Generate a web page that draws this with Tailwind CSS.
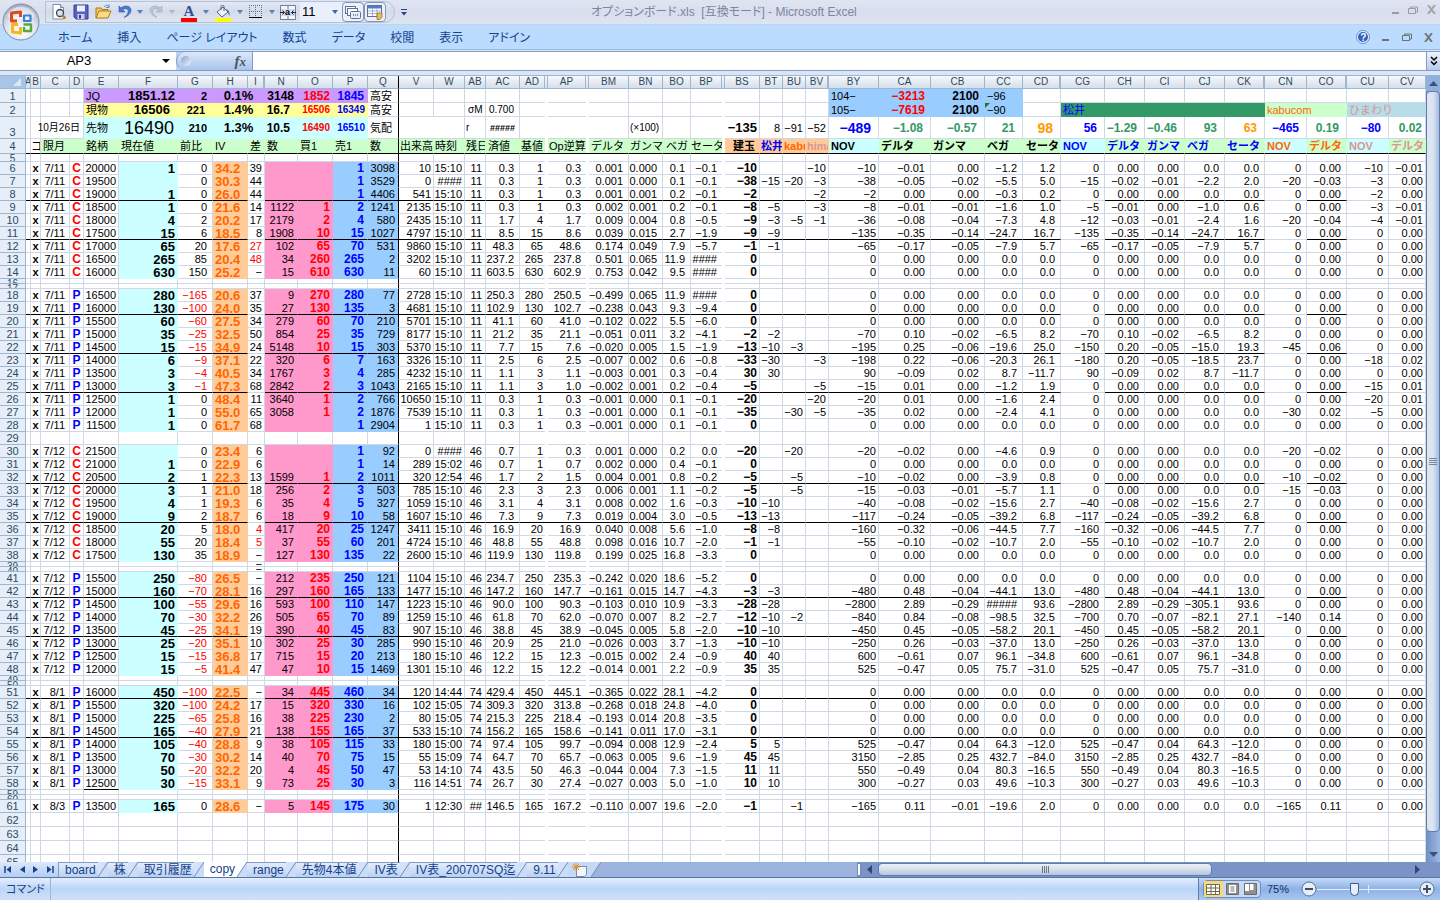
<!DOCTYPE html>
<html lang="ja">
<head>
    <meta charset="UTF-8">
    <meta name="viewport" content="width=device-width, initial-scale=1.0">
    <title>オプションボード.xls [互換モード] - Microsoft Excel</title>
    <script src="https://cdn.jsdelivr.net/npm/@tailwindcss/browser@4"></script>
</head>
<body class="h-screen flex flex-col overflow-hidden bg-[#dbe5f5] text-black font-['Liberation_Sans','Noto_Sans_CJK_JP',sans-serif]">

    <!-- Title bar and ribbon tabs -->
    <header class="relative shrink-0">
        <div class="h-[25px] pl-[45px] flex items-center bg-linear-to-b from-[#dfe6f1] via-[#d9ddee] to-[#dde6f0] border-b border-[#c3d3ea]">
            <div class="h-[22px] pl-0.5 pr-2 flex items-center rounded-r-full border border-[#b4c1d6] bg-linear-to-b from-[#e3e9f4] via-[#d3dbea] to-[#dfe6f2]">
                <button class="w-[22px] flex justify-center" aria-label="印刷プレビュー">
                    <svg width="16" height="16" viewBox="0 0 16 16"><path d="M2 .5h7.500l3 3V15H2z" fill="#fff" stroke="#7d8ba8"/><path d="M9.500 .5v3h3" fill="#d6deee" stroke="#7d8ba8"/><circle cx="9" cy="9" r="3.500" fill="#cfe4f8" stroke="#444" stroke-width="1.300"/><path d="M11.500 11.500l3 3" stroke="#b8862c" stroke-width="2.500"/></svg>
                </button>
                <button class="w-[22px] flex justify-center" aria-label="上書き保存">
                    <svg width="16" height="16" viewBox="0 0 16 16"><path d="M1 1h14v14H3l-2-2z" fill="#5a5fc0" stroke="#3a3f96"/><path d="M4 1.500h8v6H4z" fill="#e9f1fd"/><path d="M4.500 10h7v5h-7z" fill="#c9cfe6"/><path d="M6 11h2v3.500H6z" fill="#34398e"/></svg>
                </button>
                <button class="w-[22px] flex justify-center" aria-label="開く">
                    <svg width="17" height="16" viewBox="0 0 17 16"><path d="M1 14V4h5l1 1.500h6V8" fill="#f2c65a" stroke="#a97b1d"/><path d="M1 14l3-7h12l-3 7z" fill="#fbdc83" stroke="#a97b1d"/><path d="M9 3c2-2.500 4-2 5 0m0-2.500V3.500h-3" fill="none" stroke="#5b83c4"/></svg>
                </button>
                <button class="w-[22px] flex justify-center" aria-label="元に戻す">
                    <svg width="16" height="16" viewBox="0 0 16 16"><path d="M2 2v6h6L5.800 5.800C9 3.500 12 5 11 8.500c-.5 2-2 3.500-4 5 4-1.500 7-4 7-7.500C14 2 8 .5 4 4z" fill="#4a7ad0" stroke="#2f58a5" stroke-width=".6"/></svg>
                </button>
                <svg class="mx-px" width="6" height="4" viewBox="0 0 6 4"><path d="M0 0h6L3 4z" fill="#5c7fb8"/></svg>
                <button class="w-6 flex justify-center" aria-label="やり直し">
                    <svg width="16" height="16" viewBox="0 0 16 16"><path d="M14 2v6H8l2.200-2.200C7 3.500 4 5 5 8.500c.5 2 2 3.500 4 5-4-1.500-7-4-7-7.500C2 2 8 .5 12 4z" fill="#b9c4d6" stroke="#a0adc3" stroke-width=".6"/></svg>
                </button>
                <svg class="mx-px" width="6" height="4" viewBox="0 0 6 4"><path d="M0 0h6L3 4z" fill="#b3b8bf"/></svg>
                <button class="w-[26px] pt-0.5 flex flex-col items-center font-['Liberation_Serif',serif] font-bold text-[15px] leading-[13px] text-[#2f4f96]" aria-label="フォントの色">A<span class="w-4 h-1 bg-[#ff0000]"></span></button>
                <svg class="mx-px" width="6" height="4" viewBox="0 0 6 4"><path d="M0 0h6L3 4z" fill="#5c7fb8"/></svg>
                <button class="w-[26px] pt-0.5 flex flex-col items-center" aria-label="塗りつぶしの色">
                    <svg width="16" height="13" viewBox="0 0 16 13"><path d="M2 7l6-5 5 5-6 5z" fill="#eef2fa" stroke="#52617e"/><path d="M6 5V1.500c0-1.500 3-1.500 3 0V6" fill="none" stroke="#52617e"/><path d="M11 4c3 1 4 3 3.500 7-1-1-1-3-2-4.500z" fill="#4a78c8"/></svg>
                    <span class="w-4 h-1 bg-[#ffff00]"></span>
                </button>
                <svg class="mx-px" width="6" height="4" viewBox="0 0 6 4"><path d="M0 0h6L3 4z" fill="#5c7fb8"/></svg>
                <button class="w-6 flex justify-center" aria-label="罫線">
                    <svg width="14" height="14" viewBox="0 0 14 14"><path d="M.5 0v12M6.500 0v12M12.500 0v12M0 .5h13M0 6.500h13" stroke="#5f6b84" stroke-dasharray="1 1"/><path d="M0 12.500h13" stroke="#000"/></svg>
                </button>
                <svg class="mx-px" width="6" height="4" viewBox="0 0 6 4"><path d="M0 0h6L3 4z" fill="#5c7fb8"/></svg>
                <button class="w-6 flex justify-center" aria-label="セルを結合して中央揃え">
                    <svg width="16" height="15" viewBox="0 0 16 15"><path d="M.5 .5h15v14H.5z" fill="#f4f7fc" stroke="#6f7f9d"/><path d="M0 4.500h16M0 10.500h16M8 0v4M8 11v4" stroke="#6f7f9d"/><path d="M1 4h14v7H1z" fill="#cfdcf2"/><path d="M0 7.500h4.500M2.500 5.500L4.500 7.500l-2 2M16 7.500h-4.500M13.500 5.500l-2 2 2 2" fill="none" stroke="#222"/><text x="5" y="10" font-size="9" font-weight="bold">a</text></svg>
                </button>
                <label class="relative w-[42px] h-5 flex items-center bg-[#e9f0fb]">
                    <span class="sr-only">フォント サイズ</span>
                    <select class="w-full h-full pl-0.5 appearance-none text-[13px] leading-5"><option>11</option><option>12</option></select>
                    <svg class="absolute right-1" width="6" height="4" viewBox="0 0 6 4"><path d="M0 0h6L3 4z" fill="#3f66a8"/></svg>
                </label>
                <button class="w-[22px] h-5 flex justify-center items-center rounded-sm border border-[#8396b8] bg-[#edf2fa]" aria-label="ウィンドウの切り替え">
                    <svg width="16" height="13" viewBox="0 0 16 13"><rect x=".5" y=".5" width="10" height="7" fill="#fff" stroke="#5a719c"/><rect x="2.500" y="2.500" width="10" height="7" fill="#fff" stroke="#5a719c"/><rect x="5.500" y="5.500" width="10" height="7" rx="1" fill="#e5eefb" stroke="#5a719c"/><path d="M8 9h1M10 9h1M12 9h1" stroke="#333"/></svg>
                </button>
                <button class="w-[22px] h-5 flex justify-center items-center rounded-sm border border-[#8396b8] bg-[#edf2fa]" aria-label="図のリンク貼り付け">
                    <svg width="16" height="15" viewBox="0 0 16 15"><rect x=".5" y=".5" width="14" height="11" fill="#fff" stroke="#5a719c"/><path d="M1 1h13v2.500H1z" fill="#4d7cc9"/><path d="M1 6h13M1 8.500h13M5.500 3v8M10 3v8" stroke="#9db3d8"/><path d="M10 8h5v4l-2 2.500h-3z" fill="#e8bd55" stroke="#8f6516" stroke-width=".7"/></svg>
                </button>
            </div>
            <button class="ml-1.5" aria-label="クイック アクセス ツール バーのカスタマイズ"><svg width="6" height="7" viewBox="0 0 6 7"><path d="M0 .5h6" stroke="#2b477f"/><path d="M0 3h6L3 6.500z" fill="#2b477f"/></svg></button>
            <h1 class="flex-1 pl-[184px] text-xs whitespace-pre text-[#7b879e] [font-feature-settings:'palt']">オプションボード.xls  [互換モード] - Microsoft Excel</h1>
            <div class="pr-1 pt-[5px] self-start flex items-center gap-[9px]">
                <button aria-label="最小化"><svg width="8" height="8" viewBox="0 0 8 8"><path d="M1 7h7" stroke="#9b9ba6" stroke-width="2"/></svg></button>
                <button aria-label="元に戻す (縮小)"><svg width="10" height="8" viewBox="0 0 10 8"><path d="M2.500 2V1h7v5H8M.5 2.500h7v5h-7z" fill="none" stroke="#9b9ba6"/></svg></button>
                <button aria-label="閉じる"><svg width="9" height="9" viewBox="0 0 9 9"><path d="M1 0l7 9M8 0L1 9" stroke="#a7a3a3" stroke-width="2"/></svg></button>
            </div>
        </div>
        <div class="h-[25px] pl-[58px] pr-1.5 flex items-center justify-between bg-[#bbdcff] border-b border-[#9fb9dd] text-xs text-[#15428b]">
            <nav class="flex gap-[25px] pt-0.5 whitespace-nowrap [font-feature-settings:'palt']">
                <a href="#home">ホーム</a>
                <a href="#insert">挿入</a>
                <a href="#layout">ページ レイアウト</a>
                <a href="#formula">数式</a>
                <a href="#data">データ</a>
                <a href="#review">校閲</a>
                <a href="#view">表示</a>
                <a href="#addin">アドイン</a>
            </nav>
            <div class="flex items-center gap-3">
                <button aria-label="ヘルプ"><svg width="14" height="14" viewBox="0 0 14 14"><circle cx="7" cy="7" r="6.500" fill="#eaf3ff" stroke="#6c8fc6"/><circle cx="7" cy="7" r="5" fill="#2e62c0"/><text x="4.200" y="10.500" font-size="10" font-weight="bold" fill="#fff">?</text></svg></button>
                <button aria-label="ブックを最小化"><svg width="8" height="8" viewBox="0 0 8 8"><path d="M0 7h7" stroke="#6a7078" stroke-width="2"/></svg></button>
                <button aria-label="ブックを元に戻す"><svg width="10" height="8" viewBox="0 0 10 8"><path d="M2.500 2V1h7v5H8M.5 2.500h7v5h-7z" fill="none" stroke="#6a7078"/></svg></button>
                <button aria-label="ブックを閉じる"><svg width="10" height="9" viewBox="0 0 10 9"><path d="M1 0l7 9M8 0L1 9" stroke="#767676" stroke-width="2"/></svg></button>
            </div>
        </div>
        <button class="absolute left-[2px] top-[3px]" aria-label="Office ボタン">
            <svg width="38" height="38" viewBox="0 0 38 38">
                <defs>
                    <radialGradient id="orb" cx=".5" cy=".75" r=".7"><stop offset="0" stop-color="#fff"/><stop offset=".6" stop-color="#dfe4ee"/><stop offset="1" stop-color="#a7b0c4"/></radialGradient>
                </defs>
                <circle cx="19" cy="19" r="18" fill="url(#orb)" stroke="#7e8aa3"/>
                <path d="M5 13a15 15 0 0 1 28 0c-6 5-22 5-28 0z" fill="#fff" opacity=".5"/>
                <g fill="none" stroke-width="3" stroke-linejoin="round">
                    <path d="M15 18H9.500V10l9-1v5" stroke="#dd4a1e"/>
                    <path d="M22 12.500h6.500v5.500H22z" stroke="#3e7fd0" stroke-width="2.200"/>
                    <path d="M16 21.500h-5.500V29l8 1v-6" stroke="#f5b81d"/>
                    <path d="M21.500 21.500H29V28h-7v-4" stroke="#5aa83a" stroke-width="2.400"/>
                </g>
            </svg>
        </button>
    </header>

    <!-- Formula bar -->
    <div class="mt-px mb-1 h-5 shrink-0 flex border-y border-[#7f9dc9] bg-[#bfd4f2]">
        <label class="w-44 flex items-center bg-white pr-1.5">
            <span class="sr-only">名前ボックス</span>
            <input class="min-w-0 flex-1 pr-1 text-center text-[13px] outline-none" value="AP3">
            <svg width="8" height="4" viewBox="0 0 8 4"><path d="M0 0h8L4 4z"/></svg>
        </label>
        <div class="w-[77px] pl-1 pr-1.5 flex items-center justify-between rounded-l-full border-l border-r border-[#7f9dc9] bg-linear-to-b from-[#dbe8fa] to-[#a9c4ec]">
            <span class="size-2.5 rounded-full bg-linear-to-br from-[#8aa3c8] to-[#eef5ff]"></span>
            <button class="font-['Liberation_Serif',serif] italic font-bold text-[15px] leading-4 text-[#4d5560]" aria-label="関数の挿入">f<span class="text-[13px]">x</span></button>
        </div>
        <input class="flex-1 px-1 bg-white text-[13px] outline-none" aria-label="数式バー">
        <button class="w-3.5 flex justify-center items-center border-l border-[#7f9dc9] bg-linear-to-b from-[#eef4fd] to-[#b6cbec]" aria-label="数式バーの展開"><svg width="8" height="10" viewBox="0 0 8 10"><path d="M1 1l3 3 3-3M1 5.500l3 3 3-3" fill="none" stroke="#000" stroke-width="1.500"/></svg></button>
    </div>

    <!-- Worksheet -->
    <main class="flex-1 min-h-0 flex">
        <div class="flex-1 min-w-0 overflow-hidden bg-white border-t border-[#9eb6ce]">
            <table class="w-full table-fixed border-separate border-spacing-0 text-[11px] leading-3 whitespace-nowrap">
                <colgroup id="cols"></colgroup>
                <thead id="head"></thead>
                <tbody id="body"></tbody>
            </table>
        </div>
        <div class="w-3.5 flex flex-col bg-linear-to-r from-[#6f8fc2] to-[#9db9e2]">
            <button class="h-4 flex justify-center items-center bg-[#8fb0dc]" aria-label="上へスクロール"><svg width="9" height="5" viewBox="0 0 9 5"><path d="M0 5h9L4.500 0z" fill="#3a4f7d"/></svg></button>
            <div class="mb-[14px] flex-1 flex flex-col justify-center items-center gap-px rounded-sm border border-[#5f7cac] bg-linear-to-r from-[#dfe5ee] via-[#dbe5f2] to-[#a3bce0]">
                <span class="w-2 h-px bg-[#7a8698]"></span><span class="w-2 h-px bg-[#7a8698]"></span><span class="w-2 h-px bg-[#7a8698]"></span><span class="w-2 h-px bg-[#7a8698]"></span>
            </div>
            <button class="h-4 flex justify-center items-center" aria-label="下へスクロール"><svg width="9" height="5" viewBox="0 0 9 5"><path d="M0 0h9L4.500 5z" fill="#3a4f7d"/></svg></button>
        </div>
    </main>

    <!-- Sheet tabs and horizontal scroll bar -->
    <div class="h-4 shrink-0 flex bg-[#7b93c6] border-b border-[#5674a8]">
        <div class="flex-1 flex bg-[#9db3df]">
            <div class="w-[59px] px-1 flex items-center justify-between border-r border-[#7f9dc9] bg-linear-to-b from-[#dce9fb] to-[#b3cdf2]">
                <button aria-label="先頭のシート"><svg width="8" height="7" viewBox="0 0 8 7"><path d="M1 0v7" stroke="#15428b" stroke-width="1.500"/><path d="M7 0v7L2.500 3.500z" fill="#15428b"/></svg></button>
                <button aria-label="前のシート"><svg width="5" height="7" viewBox="0 0 5 7"><path d="M5 0v7L0 3.500z" fill="#15428b"/></svg></button>
                <button aria-label="次のシート"><svg width="5" height="7" viewBox="0 0 5 7"><path d="M0 0v7l5-3.500z" fill="#15428b"/></svg></button>
                <button aria-label="最後のシート"><svg width="8" height="7" viewBox="0 0 8 7"><path d="M7 0v7" stroke="#15428b" stroke-width="1.500"/><path d="M1 0v7l4.500-3.500z" fill="#15428b"/></svg></button>
            </div>
            <div id="tabs" class="flex text-xs leading-[15px] text-[#15428b] whitespace-nowrap"></div>
        </div>
        <div class="w-[583px] flex">
            <span class="w-1 my-px border border-[#6d8bbf] bg-white"></span>
            <button class="w-[17px] flex justify-center items-center" aria-label="左へスクロール"><svg width="5" height="9" viewBox="0 0 5 9"><path d="M5 0v9L0 4.500z" fill="#34486f"/></svg></button>
            <div class="w-[334px] my-px flex justify-center items-center gap-px rounded-sm border border-[#5f7cac] bg-linear-to-b from-[#eef1f5] via-[#d5deea] to-[#b2c6e0]">
                <span class="w-px h-[7px] bg-[#6c7888]"></span><span class="w-px h-[7px] bg-[#6c7888]"></span><span class="w-px h-[7px] bg-[#6c7888]"></span><span class="w-px h-[7px] bg-[#6c7888]"></span>
            </div>
            <button class="ml-auto mr-5 flex items-center" aria-label="右へスクロール"><svg width="5" height="9" viewBox="0 0 5 9"><path d="M0 0v9l5-4.500z" fill="#34486f"/></svg></button>
        </div>
    </div>

    <!-- Status bar -->
    <footer class="h-[22px] shrink-0 flex text-[#15428b] bg-linear-to-b from-[#e3effe] via-[#bcd5f6] to-[#cfe1f9]">
        <div class="w-[51px] pl-1.5 flex items-center border-r border-[#9ab6dd] text-[11px] [font-feature-settings:'palt']">コマンド</div>
        <div class="ml-auto w-[242px] pl-1 pr-1 flex items-center border-l border-[#5f7cac] bg-linear-to-b from-[#c4daf8] via-[#8db2e6] to-[#a9c7f0]">
            <div class="w-[58px] h-[18px] flex rounded-sm border border-[#6d8bbf] bg-[#c5daf5]">
                <button class="flex-1 flex justify-center items-center bg-[#fbd777]" aria-label="標準"><svg width="14" height="11" viewBox="0 0 14 11"><path d="M.5 .5h13v10H.5zM.5 4h13M.5 7.500h13M5 .5v10M9.500 .5v10" fill="#fff" stroke="#6b6b55"/></svg></button>
                <button class="flex-1 flex justify-center items-center" aria-label="ページ レイアウト"><svg width="13" height="12" viewBox="0 0 13 12"><path d="M.5 .5h12v11H.5z" fill="#909090" stroke="#6b6b6b"/><path d="M3 2h7v8H3z" fill="#fff"/><path d="M4.500 4h4M4.500 6h4M4.500 8h4" stroke="#777"/></svg></button>
                <button class="flex-1 flex justify-center items-center" aria-label="改ページ プレビュー"><svg width="13" height="12" viewBox="0 0 13 12"><path d="M.5 .5h12v11H.5z" fill="#909090" stroke="#6b6b6b"/><path d="M1 1h4v7H1zM6 1h3.500v6H6z" fill="#fff"/></svg></button>
            </div>
            <button class="w-[34px] text-[11px] leading-4 text-[#0c2f6e]">75%</button>
            <button class="ml-1.5" aria-label="縮小"><svg width="16" height="16" viewBox="0 0 16 16"><circle cx="8" cy="8" r="7" fill="#e9eef6" stroke="#54719f"/><path d="M4 8h8" stroke="#3c4f73" stroke-width="2"/></svg></button>
            <input type="range" min="0" max="200" value="72" aria-label="ズーム" class="flex-1 min-w-0 h-4 appearance-none bg-[linear-gradient(#e8effa,#e8effa),linear-gradient(#e8effa,#e8effa)] bg-[length:100%_1px,1px_8px] bg-center bg-no-repeat [&::-webkit-slider-thumb]:appearance-none [&::-webkit-slider-thumb]:w-[9px] [&::-webkit-slider-thumb]:h-[13px] [&::-webkit-slider-thumb]:rounded-b-full [&::-webkit-slider-thumb]:border [&::-webkit-slider-thumb]:border-[#3f5d92] [&::-webkit-slider-thumb]:bg-[#e6eefa]">
            <button class="mr-px" aria-label="拡大"><svg width="16" height="16" viewBox="0 0 16 16"><circle cx="8" cy="8" r="7" fill="#e9eef6" stroke="#54719f"/><path d="M4 8h8M8 4v8" stroke="#3c4f73" stroke-width="2"/></svg></button>
        </div>
    </footer>

    <script>
        // column id, width, style of the data cells ("gap" columns stand for hidden ones)
        const cols = [
            ['A', 'w-[5px]', ''],
            ['B', 'w-[10px]', 'font-bold justify-center'],
            ['C', 'w-[29px]', 'justify-end pr-1'],
            ['D', 'w-[14px]', 'font-bold text-xs leading-3 justify-center'],
            ['E', 'w-[35px]', 'justify-end pr-0.5'],
            ['F', 'w-[59px]', 'justify-end pr-0.5 pt-px font-bold text-[13px]'],
            ['G', 'w-[35px]', 'justify-end pr-[5px]'],
            ['H', 'w-[35px]', 'pl-0.5 pt-px font-bold text-[13px] text-[#ff6600]'],
            ['I', 'w-[17px]', 'justify-end pr-0.5'],
            ['N', 'w-[33px]', 'justify-end pr-[3px]'],
            ['O', 'w-[35px]', 'justify-end pr-0.5 font-bold text-xs text-[#ff0000]'],
            ['P', 'w-[35px]', 'justify-end pr-[3px] font-bold text-xs text-[#0000ff]'],
            ['Q', 'w-[31px]', 'justify-end pr-[3px]'],
            ['V', 'w-[35px]', 'justify-end pr-0.5'],
            ['W', 'w-[31px]', 'justify-end pr-0.5'],
            ['AB', 'w-[21px]', 'justify-end pr-[3px]'],
            ['AC', 'w-[34px]', 'justify-end pr-[5px]'],
            ['AD', 'w-[25px]', 'justify-end pr-0.5'],
            ['gap', 'w-[3px]', ''],
            ['AP', 'w-[38px]', 'justify-end pr-[5px]'],
            ['gap', 'w-[3px]', ''],
            ['BM', 'w-[40px]', 'justify-end pr-[5px]'],
            ['BN', 'w-[34px]', 'justify-end pr-[5px]'],
            ['BO', 'w-[28px]', 'justify-end pr-[5px]'],
            ['BP', 'w-[31px]', 'justify-end pr-[5px]'],
            ['gap', 'w-[3px]', ''],
            ['BS', 'w-[35px]', 'justify-end pr-0.5 font-bold text-xs'],
            ['BT', 'w-[23px]', 'justify-end pr-0.5'],
            ['BU', 'w-[23px]', 'justify-end pr-0.5'],
            ['BV', 'w-[23px]', 'justify-end pr-0.5'],
            ['BY', 'w-[50px]', 'justify-end pr-0.5'],
            ['CA', 'w-[52px]', 'justify-end pr-[5px]'],
            ['CB', 'w-[54px]', 'justify-end pr-[5px]'],
            ['CC', 'w-[38px]', 'justify-end pr-[5px]'],
            ['CD', 'w-[38px]', 'justify-end pr-[5px]'],
            ['CG', 'w-[44px]', 'justify-end pr-[5px]'],
            ['CH', 'w-[40px]', 'justify-end pr-[5px]'],
            ['CI', 'w-[40px]', 'justify-end pr-[5px]'],
            ['CJ', 'w-[40px]', 'justify-end pr-[5px]'],
            ['CK', 'w-[40px]', 'justify-end pr-[5px]'],
            ['CN', 'w-[42px]', 'justify-end pr-[5px]'],
            ['CO', 'w-[40px]', 'justify-end pr-[5px]'],
            ['CU', 'w-[42px]', 'justify-end pr-[5px]'],
            ['CV', 'w-[37px]', 'justify-end pr-0.5'],
        ];
        const ids = cols.map(c => c[0]);

        const dataFill = { F: 'bg-[#ccffff]', H: 'bg-[#ffcc99]', N: 'bg-[#ff99cc]', O: 'bg-[#ff99cc]', P: 'bg-[#99ccff]', Q: 'bg-[#99ccff]' };
        const wideLine = [4, 51, 54];
        const lines = [8, 11, 19, 22, 25, 32, 35, 42, 45, 51, 54];
        const underlined = [22, 46, 58];
        const redI = [12, 13, 36, 37];

        // C D E F G H I N O P Q V W AB AC AD AP BM BN BO BP BS BT BU BV BY CA CB CC CD CG CH CI CJ CK CN CO CU CV
        const data = {
            6: '7/11 C 20000 1 0 34.2 39 _ _ 1 3098 10 15:10 11 0.3 1 0.3 0.001 0.000 0.1 -0.1 -10 _ _ -10 -10 -0.01 0.00 -1.2 1.2 0 0.00 0.00 0.0 0.0 0 0.00 -10 -0.01',
            7: '7/11 C 19500 _ 0 30.3 44 _ _ 1 3529 0 #### 11 0.3 1 0.3 0.001 0.000 0.1 -0.1 -38 -15 -20 -3 -38 -0.05 -0.02 -5.5 5.0 -15 -0.02 -0.01 -2.2 2.0 -20 -0.03 -3 0.00',
            8: '7/11 C 19000 1 0 26.0 44 _ _ 1 4406 541 15:10 11 0.3 1 0.3 0.001 0.001 0.2 -0.1 -2 _ _ -2 -2 0.00 0.00 -0.3 0.2 0 0.00 0.00 0.0 0.0 0 0.00 -2 0.00',
            9: '7/11 C 18500 1 0 21.6 14 1122 1 2 1241 2135 15:10 11 0.3 1 0.3 0.002 0.001 0.2 -0.1 -8 -5 _ -3 -8 -0.01 -0.01 -1.6 1.0 -5 -0.01 0.00 -1.0 0.6 0 0.00 -3 -0.01',
            10: '7/11 C 18000 4 2 20.2 17 2179 2 4 580 2435 15:10 11 1.7 4 1.7 0.009 0.004 0.8 -0.5 -9 -3 -5 -1 -36 -0.08 -0.04 -7.3 4.8 -12 -0.03 -0.01 -2.4 1.6 -20 -0.04 -4 -0.01',
            11: '7/11 C 17500 15 6 18.5 8 1908 10 15 1027 4797 15:10 11 8.5 15 8.6 0.039 0.015 2.7 -1.9 -9 -9 _ _ -135 -0.35 -0.14 -24.7 16.7 -135 -0.35 -0.14 -24.7 16.7 0 0.00 0 0.00',
            12: '7/11 C 17000 65 20 17.6 27 102 65 70 531 9860 15:10 11 48.3 65 48.6 0.174 0.049 7.9 -5.7 -1 -1 _ _ -65 -0.17 -0.05 -7.9 5.7 -65 -0.17 -0.05 -7.9 5.7 0 0.00 0 0.00',
            13: '7/11 C 16500 265 85 20.4 48 34 260 265 2 3202 15:10 11 237.2 265 237.8 0.501 0.065 11.9 #### 0 _ _ _ 0 0.00 0.00 0.0 0.0 0 0.00 0.00 0.0 0.0 0 0.00 0 0.00',
            14: '7/11 C 16000 630 150 25.2 - 15 610 630 11 60 15:10 11 603.5 630 602.9 0.753 0.042 9.5 #### 0 _ _ _ 0 0.00 0.00 0.0 0.0 0 0.00 0.00 0.0 0.0 0 0.00 0 0.00',
            18: '7/11 P 16500 280 -165 20.6 37 9 270 280 77 2728 15:10 11 250.3 280 250.5 -0.499 0.065 11.9 #### 0 _ _ _ 0 0.00 0.00 0.0 0.0 0 0.00 0.00 0.0 0.0 0 0.00 0 0.00',
            19: '7/11 P 16000 130 -100 24.0 35 27 130 135 3 4681 15:10 11 102.9 130 102.7 -0.238 0.043 9.3 -9.4 0 _ _ _ 0 0.00 0.00 0.0 0.0 0 0.00 0.00 0.0 0.0 0 0.00 0 0.00',
            20: '7/11 P 15500 60 -60 27.5 34 279 60 70 210 5701 15:10 11 41.1 60 41.0 -0.102 0.022 5.5 -6.0 0 _ _ _ 0 0.00 0.00 0.0 0.0 0 0.00 0.00 0.0 0.0 0 0.00 0 0.00',
            21: '7/11 P 15000 35 -25 32.5 50 854 25 35 729 8177 15:10 11 21.2 35 21.1 -0.051 0.011 3.2 -4.1 -2 -2 _ _ -70 0.10 -0.02 -6.5 8.2 -70 0.10 -0.02 -6.5 8.2 0 0.00 0 0.00',
            22: '7/11 P 14500 15 -15 34.9 24 5148 10 15 303 5370 15:10 11 7.7 15 7.6 -0.020 0.005 1.5 -1.9 -13 -10 -3 _ -195 0.25 -0.06 -19.6 25.0 -150 0.20 -0.05 -15.0 19.3 -45 0.06 0 0.00',
            23: '7/11 P 14000 6 -9 37.1 22 320 6 7 163 3326 15:10 11 2.5 6 2.5 -0.007 0.002 0.6 -0.8 -33 -30 _ -3 -198 0.22 -0.06 -20.3 26.1 -180 0.20 -0.05 -18.5 23.7 0 0.00 -18 0.02',
            24: '7/11 P 13500 3 -4 40.5 34 1767 3 4 285 4232 15:10 11 1.1 3 1.1 -0.003 0.001 0.3 -0.4 30 30 _ _ 90 -0.09 0.02 8.7 -11.7 90 -0.09 0.02 8.7 -11.7 0 0.00 0 0.00',
            25: '7/11 P 13000 3 -1 47.3 68 2842 2 3 1043 2165 15:10 11 1.1 3 1.0 -0.002 0.001 0.2 -0.4 -5 _ _ -5 -15 0.01 0.00 -1.2 1.9 0 0.00 0.00 0.0 0.0 0 0.00 -15 0.01',
            26: '7/11 P 12500 1 0 48.4 11 3640 1 2 766 10650 15:10 11 0.3 1 0.3 -0.001 0.000 0.1 -0.1 -20 _ _ -20 -20 0.01 0.00 -1.6 2.4 0 0.00 0.00 0.0 0.0 0 0.00 -20 0.01',
            27: '7/11 P 12000 1 0 55.0 65 3058 1 2 1876 7539 15:10 11 0.3 1 0.3 -0.001 0.000 0.1 -0.1 -35 _ -30 -5 -35 0.02 0.00 -2.4 4.1 0 0.00 0.00 0.0 0.0 -30 0.02 -5 0.00',
            28: '7/11 P 11500 1 0 61.7 68 _ _ 1 2904 1 15:10 11 0.3 1 0.3 -0.001 0.000 0.1 -0.1 0 _ _ _ 0 0.00 0.00 0.0 0.0 0 0.00 0.00 0.0 0.0 0 0.00 0 0.00',
            30: '7/12 C 21500 _ 0 23.4 6 _ _ 1 92 0 #### 46 0.7 1 0.3 0.001 0.000 0.2 0.0 -20 _ -20 _ -20 -0.02 0.00 -4.6 0.9 0 0.00 0.00 0.0 0.0 -20 -0.02 0 0.00',
            31: '7/12 C 21000 1 0 22.9 6 _ _ 1 14 289 15:02 46 0.7 1 0.7 0.002 0.000 0.4 -0.1 0 _ _ _ 0 0.00 0.00 0.0 0.0 0 0.00 0.00 0.0 0.0 0 0.00 0 0.00',
            32: '7/12 C 20500 2 1 22.3 13 1599 1 2 1011 320 12:54 46 1.7 2 1.5 0.004 0.001 0.8 -0.2 -5 _ -5 _ -10 -0.02 0.00 -3.9 0.8 0 0.00 0.00 0.0 0.0 -10 -0.02 0 0.00',
            33: '7/12 C 20000 3 1 21.0 18 256 2 3 503 785 15:10 46 2.3 3 2.3 0.006 0.001 1.1 -0.2 -5 _ -5 _ -15 -0.03 -0.01 -5.7 1.1 0 0.00 0.00 0.0 0.0 -15 -0.03 0 0.00',
            34: '7/12 C 19500 4 1 19.3 6 35 4 5 327 1059 15:10 46 3.1 4 3.1 0.008 0.002 1.6 -0.3 -10 -10 _ _ -40 -0.08 -0.02 -15.6 2.7 -40 -0.08 -0.02 -15.6 2.7 0 0.00 0 0.00',
            35: '7/12 C 19000 9 2 18.7 6 18 9 10 58 1607 15:10 46 7.3 9 7.3 0.019 0.004 3.0 -0.5 -13 -13 _ _ -117 -0.24 -0.05 -39.2 6.8 -117 -0.24 -0.05 -39.2 6.8 0 0.00 0 0.00',
            36: '7/12 C 18500 20 5 18.0 4 417 20 25 1247 3411 15:10 46 16.9 20 16.9 0.040 0.008 5.6 -1.0 -8 -8 _ _ -160 -0.32 -0.06 -44.5 7.7 -160 -0.32 -0.06 -44.5 7.7 0 0.00 0 0.00',
            37: '7/12 C 18000 55 20 18.4 5 37 55 60 201 4724 15:10 46 48.8 55 48.8 0.098 0.016 10.7 -2.0 -1 -1 _ _ -55 -0.10 -0.02 -10.7 2.0 -55 -0.10 -0.02 -10.7 2.0 0 0.00 0 0.00',
            38: '7/12 C 17500 130 35 18.9 - 127 130 135 22 2600 15:10 46 119.9 130 119.8 0.199 0.025 16.8 -3.3 0 _ _ _ 0 0.00 0.00 0.0 0.0 0 0.00 0.00 0.0 0.0 0 0.00 0 0.00',
            41: '7/12 P 15500 250 -80 26.5 - 212 235 250 121 1104 15:10 46 234.7 250 235.3 -0.242 0.020 18.6 -5.2 0 _ _ _ 0 0.00 0.00 0.0 0.0 0 0.00 0.00 0.0 0.0 0 0.00 0 0.00',
            42: '7/12 P 15000 160 -70 28.1 16 297 160 165 133 1477 15:10 46 147.2 160 147.7 -0.161 0.015 14.7 -4.3 -3 -3 _ _ -480 0.48 -0.04 -44.1 13.0 -480 0.48 -0.04 -44.1 13.0 0 0.00 0 0.00',
            43: '7/12 P 14500 100 -55 29.6 16 593 100 110 147 1223 15:10 46 90.0 100 90.3 -0.103 0.010 10.9 -3.3 -28 -28 _ _ -2800 2.89 -0.29 ##### 93.6 -2800 2.89 -0.29 -305.1 93.6 0 0.00 0 0.00',
            44: '7/12 P 14000 70 -30 32.2 26 505 65 70 89 1259 15:10 46 61.8 70 62.0 -0.070 0.007 8.2 -2.7 -12 -10 -2 _ -840 0.84 -0.08 -98.5 32.5 -700 0.70 -0.07 -82.1 27.1 -140 0.14 0 0.00',
            45: '7/12 P 13500 45 -25 34.1 19 390 40 45 83 907 15:10 46 38.8 45 38.9 -0.045 0.005 5.8 -2.0 -10 -10 _ _ -450 0.45 -0.05 -58.2 20.1 -450 0.45 -0.05 -58.2 20.1 0 0.00 0 0.00',
            46: '7/12 P 13000 25 -20 35.1 10 302 25 30 285 990 15:10 46 20.9 25 21.0 -0.026 0.003 3.7 -1.3 -10 -10 _ _ -250 0.26 -0.03 -37.0 13.0 -250 0.26 -0.03 -37.0 13.0 0 0.00 0 0.00',
            47: '7/12 P 12500 15 -15 36.8 17 715 15 20 213 180 15:10 46 12.2 15 12.3 -0.015 0.002 2.4 -0.9 40 40 _ _ 600 -0.61 0.07 96.1 -34.8 600 -0.61 0.07 96.1 -34.8 0 0.00 0 0.00',
            48: '7/12 P 12000 15 -5 41.4 47 47 10 15 1469 1301 15:10 46 12.2 15 12.2 -0.014 0.001 2.2 -0.9 35 35 _ _ 525 -0.47 0.05 75.7 -31.0 525 -0.47 0.05 75.7 -31.0 0 0.00 0 0.00',
            51: '8/1 P 16000 450 -100 22.5 - 34 445 460 34 120 14:44 74 429.4 450 445.1 -0.365 0.022 28.1 -4.2 0 _ _ _ 0 0.00 0.00 0.0 0.0 0 0.00 0.00 0.0 0.0 0 0.00 0 0.00',
            52: '8/1 P 15500 320 -100 24.2 17 15 320 330 16 102 15:05 74 309.3 320 313.8 -0.268 0.018 24.8 -4.0 0 _ _ _ 0 0.00 0.00 0.0 0.0 0 0.00 0.00 0.0 0.0 0 0.00 0 0.00',
            53: '8/1 P 15000 225 -65 25.8 16 38 225 230 2 80 15:05 74 215.3 225 218.4 -0.193 0.014 20.8 -3.5 0 _ _ _ 0 0.00 0.00 0.0 0.0 0 0.00 0.00 0.0 0.0 0 0.00 0 0.00',
            54: '8/1 P 14500 165 -40 27.9 21 138 155 165 37 533 15:10 74 156.2 165 158.6 -0.141 0.011 17.0 -3.1 0 _ _ _ 0 0.00 0.00 0.0 0.0 0 0.00 0.00 0.0 0.0 0 0.00 0 0.00',
            55: '8/1 P 14000 105 -40 28.8 9 38 105 115 33 180 15:00 74 97.4 105 99.7 -0.094 0.008 12.9 -2.4 5 5 _ _ 525 -0.47 0.04 64.3 -12.0 525 -0.47 0.04 64.3 -12.0 0 0.00 0 0.00',
            56: '8/1 P 13500 70 -30 30.2 14 40 70 75 15 55 15:09 74 64.7 70 65.7 -0.063 0.005 9.6 -1.9 45 45 _ _ 3150 -2.85 0.25 432.7 -84.0 3150 -2.85 0.25 432.7 -84.0 0 0.00 0 0.00',
            57: '8/1 P 13000 50 -20 32.2 20 4 45 50 47 53 14:10 74 43.5 50 46.3 -0.044 0.004 7.3 -1.5 11 11 _ _ 550 -0.49 0.04 80.3 -16.5 550 -0.49 0.04 80.3 -16.5 0 0.00 0 0.00',
            58: '8/1 P 12500 30 -15 33.1 9 73 25 30 3 116 14:51 74 26.7 30 27.4 -0.027 0.003 5.0 -1.0 10 10 _ _ 300 -0.27 0.03 49.6 -10.3 300 -0.27 0.03 49.6 -10.3 0 0.00 0 0.00',
            61: '8/3 P 13500 165 0 28.6 - 5 145 175 30 1 12:30 ## 146.5 165 167.2 -0.110 0.007 19.6 -2.0 -1 _ -1 _ -165 0.11 -0.01 -19.6 2.0 0 0.00 0.00 0.0 0.0 -165 0.11 0 0.00',
        };

        // rows 1-4: column -> [text, style, columns spanned]
        const top4 = {
            1: {
                E: ['JQ', 'pl-0.5'], F: ['1851.12', 'justify-end pr-0.5 font-bold text-[13px]'], G: ['2', 'justify-end pr-[5px] font-bold'],
                H: ['0.1%', 'justify-center font-bold text-[13px]', 2], N: ['3148', 'justify-end pr-[3px] font-bold text-xs'],
                O: ['1852', 'justify-end pr-0.5 font-bold text-xs text-[#ff0000]'], P: ['1845', 'justify-end pr-[3px] font-bold text-xs text-[#0000ff]'], Q: ['高安', 'pl-0.5'],
                BY: ['104-', 'pl-0.5'], CA: ['-3213', 'justify-end pr-[5px] font-bold text-xs text-[#ff0000]'], CB: ['2100', 'justify-end pr-[5px] font-bold text-xs'], CC: ['-96', 'pl-0.5'],
            },
            2: {
                E: ['現物', 'pl-0.5'], F: ['16506', 'justify-end pr-[7px] font-bold text-[13px]'], G: ['221', 'justify-end pr-[7px] font-bold'],
                H: ['1.4%', 'justify-center font-bold text-[13px]', 2], N: ['16.7', 'justify-end pr-[7px] font-bold text-xs'],
                O: ['16506', 'justify-end pr-0.5 font-bold text-[10px] text-[#ff0000]'], P: ['16349', 'justify-end pr-0.5 font-bold text-[10px] text-[#0000ff]'], Q: ['高安', 'pl-0.5'],
                AB: ['σM', 'pl-[3px] text-[10px]'], AC: ['0.700', 'justify-end pr-[5px] text-[10px]'],
                BY: ['105-', 'pl-0.5'], CA: ['-7619', 'justify-end pr-[5px] font-bold text-xs text-[#ff0000]'], CB: ['2100', 'justify-end pr-[5px] font-bold text-xs'], CC: ['-90', 'pl-0.5'],
                CG: ['松井', 'pl-0.5 text-[#0000ff]'], CN: ['kabucom', 'pl-0.5 text-[#ff6600]', 2], CU: ['ひまわり', 'pl-0.5 text-[#d99694]', 2],
            },
            3: {
                C: ['10月26日', 'justify-end pr-[3px] text-[10px]', 2], E: ['先物', 'pl-0.5'], F: ['16490', 'justify-end pr-[3px] text-lg'], G: ['210', 'justify-end pr-[5px] font-bold'],
                H: ['1.3%', 'justify-center font-bold text-[13px]', 2], N: ['10.5', 'justify-end pr-[7px] font-bold text-xs'],
                O: ['16490', 'justify-end pr-0.5 font-bold text-[10px] text-[#ff0000]'], P: ['16510', 'justify-end pr-0.5 font-bold text-[10px] text-[#0000ff]'], Q: ['気配', 'pl-0.5'],
                V: ['', '', 2], AB: ['r', 'pl-px text-[10px]'], AC: ['#####', 'justify-end pr-1 text-[9px] font-bold'], BN: ['(×100)', 'pl-px text-[10px]'],
                BS: ['-135', 'justify-end pr-0.5 font-bold text-[13px]'], BT: ['8', 'justify-end pr-0.5'], BU: ['-91', 'justify-end pr-0.5'], BV: ['-52', 'justify-end pr-0.5'],
                BY: ['-489', 'justify-end pr-[7px] font-bold text-sm text-[#0000ff]'], CA: ['-1.08', 'justify-end pr-[7px] font-bold text-xs text-[#339966]'],
                CB: ['-0.57', 'justify-end pr-[7px] font-bold text-xs text-[#339966]'], CC: ['21', 'justify-end pr-[7px] font-bold text-xs text-[#339966]'], CD: ['98', 'justify-end pr-[7px] font-bold text-sm text-[#ff9900]'],
                CG: ['56', 'justify-end pr-[7px] font-bold text-xs text-[#0000ff]'], CH: ['-1.29', 'justify-end pr-[7px] font-bold text-xs text-[#339966]'], CI: ['-0.46', 'justify-end pr-[7px] font-bold text-xs text-[#339966]'],
                CJ: ['93', 'justify-end pr-[7px] font-bold text-xs text-[#339966]'], CK: ['63', 'justify-end pr-[7px] font-bold text-xs text-[#ff9900]'], CN: ['-465', 'justify-end pr-[7px] font-bold text-xs text-[#0000ff]'],
                CO: ['0.19', 'justify-end pr-[7px] font-bold text-xs text-[#339966]'], CU: ['-80', 'justify-end pr-[7px] font-bold text-xs text-[#0000ff]'], CV: ['0.02', 'justify-end pr-[3px] font-bold text-xs text-[#339966]'],
            },
            4: {
                B: ['コ', 'overflow-hidden'], C: ['限月', 'pl-0.5', 2], E: ['銘柄', 'pl-0.5'], F: ['現在値', 'pl-0.5'], G: ['前比', 'pl-0.5'], H: ['IV', 'pl-0.5'], I: ['差', 'pl-0.5'], N: ['数', 'pl-0.5'],
                O: ['買1', 'pl-0.5'], P: ['売1', 'pl-0.5'], Q: ['数', 'pl-0.5'], V: ['出来高', 'pl-px'], W: ['時刻', 'pl-px'], AB: ['残日', 'pl-px overflow-hidden'], AC: ['済値', 'pl-0.5'], AD: ['基値', 'pl-px'],
                AP: ['Op逆算', 'pl-px'], BM: ['デルタ', 'pl-0.5'], BN: ['ガンマ', 'pl-px'], BO: ['ベガ', 'pl-[3px]'], BP: ['セータ', 'overflow-hidden'],
                BS: ['建玉', 'justify-end pr-1 font-bold'], BT: ['松井', 'pl-px font-bold text-[#0000ff] overflow-hidden'], BU: ['kabu', 'pl-px font-bold text-[#ff6600] overflow-hidden'], BV: ['hima', 'pl-px font-bold text-[#d99694] overflow-hidden'],
                BY: ['NOV', 'pl-0.5 font-bold'], CA: ['デルタ', 'pl-0.5 font-bold'], CB: ['ガンマ', 'pl-0.5 font-bold'], CC: ['ベガ', 'pl-0.5 font-bold'], CD: ['セータ', 'pl-[3px] font-bold'],
                CG: ['NOV', 'pl-0.5 font-bold text-[#0000ff]'], CH: ['デルタ', 'pl-0.5 font-bold text-[#0000ff]'], CI: ['ガンマ', 'pl-0.5 font-bold text-[#0000ff]'], CJ: ['ベガ', 'pl-0.5 font-bold text-[#0000ff]'], CK: ['セータ', 'pl-0.5 font-bold text-[#0000ff]'],
                CN: ['NOV', 'pl-0.5 font-bold text-[#ff6600]'], CO: ['デルタ', 'pl-0.5 font-bold text-[#ff6600]'], CU: ['NOV', 'pl-0.5 font-bold text-[#d99694]'], CV: ['デルタ', 'pl-0.5 font-bold text-[#d99694] overflow-hidden'],
            },
        };
        const topFill = {
            1: [['E', 'P', 'bg-[#cc99ff]'], ['BY', 'CC', 'bg-[#99ccff]']],
            2: [['E', 'P', 'bg-[#ffff99]'], ['BY', 'CC', 'bg-[#99ccff]'], ['CG', 'CK', 'bg-[#339966]'], ['CN', 'CO', 'bg-[#ccffcc]'], ['CU', 'CV', 'bg-[#b7dde8]']],
            3: [['E', 'P', 'bg-[#ccffff]']],
            4: [['C', 'BP', 'bg-[#ccffcc]'], ['BS', 'BV', 'bg-[#ffcc99]'], ['BY', 'BY', 'bg-[#ccffff]'], ['CA', 'CD', 'bg-[#ccffcc]'], ['CG', 'CG', 'bg-[#ccffff]'], ['CH', 'CK', 'bg-[#ccffcc]'],
                ['CN', 'CN', 'bg-[#ccffff]'], ['CO', 'CO', 'bg-[#ccffcc]'], ['CU', 'CU', 'bg-[#ccffff]'], ['CV', 'CV', 'bg-[#ccffcc]']],
        };

        const heights = { 1: 'h-[13px]', 2: 'h-[13px]', 3: 'h-[21px]', 4: 'h-[14px]', 5: 'h-[7px]', 62: 'h-[13px]', 63: 'h-[13px]', 64: 'h-[13px]', 65: 'h-[13px]' };
        const thin = [16, 17, 39, 40, 49, 50, 59, 60];
        const minus = s => s.replace(/-/g, '−');

        function fillOf(row, id) {
            if (data[row]) return dataFill[id] || '';
            for (const [from, to, cls] of topFill[row] || []) {
                const i = ids.indexOf(id);
                if (i >= ids.indexOf(from) && i <= ids.indexOf(to)) return cls;
            }
            return '';
        }

        function bottomOf(row, id, fill) {
            if (wideLine.includes(row) && !(row > 4 && id === 'I')) return 'border-b-black';
            if (lines.includes(row) && !['I', 'CG', 'CN', 'CU', 'CV'].includes(id)) return 'border-b-black';
            if (id === 'E' && underlined.includes(row)) return 'border-b-black';
            return fill || id === 'gap' ? 'border-b-transparent' : 'border-b-[#d0d7e5]';
        }

        function contentOf(row, id, style) {
            if (top4[row]) return top4[row][id] || ['', ''];
            if (id === 'I' && (row === 39 || row === 40)) return ['-', 'justify-end pr-0.5 leading-[5px] overflow-hidden'];
            if (!data[row] || id === 'A' || id === 'gap') return ['', ''];
            if (id === 'B') return ['x', style];
            const text = data[row].split(' ')[ids.filter(x => x !== 'gap').indexOf(id) - 2];
            if (id === 'D') return [text, style + (text === 'C' ? ' text-[#ff0000]' : ' text-[#0000ff]')];
            if (id === 'G' && text[0] === '-') return [text, style + ' text-[#ff0000]'];
            if (id === 'I' && redI.includes(row)) return [text, style + ' text-[#ff0000]'];
            return [text === '_' ? '' : text, style];
        }

        function rowHtml(row) {
            const h = heights[row] || (thin.includes(row) ? 'h-1' : 'h-3');
            const small = thin.includes(row) || row === 5;
            let html = `<tr><th class="p-0 font-normal text-[#2f4a60] bg-[#e6eff9] border-r border-b border-[#9eb6ce]"><div class="${h} flex justify-center ${row === 3 ? 'items-end' : small ? 'items-start' : 'items-center'} overflow-hidden">${small ? `<span class="text-[10px] leading-[10px]">${row}</span>` : row}</div></th>`;
            for (let i = 0; i < cols.length; i++) {
                const [id, , style] = cols[i];
                const [text, cls, span = 1] = contentOf(row, id, style);
                const fill = id === 'gap' ? '' : fillOf(row, id);
                const right = id === 'Q' ? 'border-r border-r-black' : id === 'gap' || ['AD', 'AP', 'BP'].includes(id) ? '' : fill ? 'border-r border-r-transparent' : 'border-r border-r-[#d0d7e5]';
                const mark = row === 2 && id === 'CC' ? '<svg class="absolute left-0 top-0" width="5" height="5" viewBox="0 0 5 5"><path d="M0 0h5L0 5z" fill="#1f7a1f"/></svg>' : '';
                html += `<td colspan="${span}" class="relative p-0 border-b ${right} ${bottomOf(row, id, fill)} ${fill}">${mark}<div class="${h} flex items-center ${cls}">${minus(text)}</div></td>`;
                i += span - 1;
            }
            return html + '</tr>';
        }

        document.getElementById('cols').innerHTML = '<col class="w-[26px]">' + cols.map(c => `<col class="${c[1]}">`).join('');

        const thick = ['I', 'CD', 'CK', 'CO', 'BV'];
        document.getElementById('head').innerHTML = '<tr><th class="p-0 bg-[#a9c4e9] border-r border-b border-[#9eb6ce]"><svg class="ml-auto mr-1" width="8" height="8" viewBox="0 0 8 8"><path d="M8 0v8H0z" fill="#dbe7f7"/></svg></th>'
            + cols.map(([id]) => `<th class="p-0 font-normal text-[10px] text-[#2f4a60] bg-linear-to-b from-[#f6f9fc] to-[#d5deeb] border-b border-b-[#9eb6ce] ${id === 'Q' ? 'border-r border-r-black' : thick.includes(id) ? 'border-r-2 border-r-[#9eb6ce]' : 'border-r border-r-[#9eb6ce]'}"><div class="h-3 flex justify-center items-center overflow-hidden">${id === 'gap' ? '' : id}</div></th>`).join('') + '</tr>';

        let rows = '';
        for (let r = 1; r <= 65; r++) {
            if (r === 15) continue;
            rows += rowHtml(r);
        }
        document.getElementById('body').innerHTML = rows;

        const sheets = ['board', '株', '取引履歴', 'copy', 'range', '先物4本値', 'IV表', 'IV表_200707SQ迄', '9.11'];
        document.getElementById('tabs').innerHTML = sheets.map(name => {
            const on = name === 'copy';
            return `<button class="pl-1.5 pr-0.5 ${on ? 'bg-white' : 'border-t border-[#7f9dc9] bg-linear-to-b from-[#e3edfc] to-[#b9d0f2]'}">${name}</button><svg width="10" height="15" viewBox="0 0 10 15"><path d="M0 0h10v15H0z" fill="#cbdcf5"/><path d="M0 0h10L0 15z" fill="${on ? '#fff' : '#d3e2f8'}"/><path d="M0 15L10 0" stroke="#6d8bbf"/></svg>`;
        }).join('') + '<button class="px-1 bg-[#c5d8f4]" aria-label="ワークシートの挿入"><svg width="15" height="14" viewBox="0 0 15 14"><path d="M4.500 3.500h10v8l-2 2h-8z" fill="#f3f7fd" stroke="#7d8ba8"/><path d="M4 0v8M0 4h8M1 1l6 6M7 1L1 7" stroke="#e88a1a"/></svg></button><svg width="10" height="15" viewBox="0 0 10 15"><path d="M0 0h10L0 15z" fill="#c5d8f4"/><path d="M0 15L10 0" stroke="#6d8bbf"/></svg>';
    </script>
</body>
</html>
